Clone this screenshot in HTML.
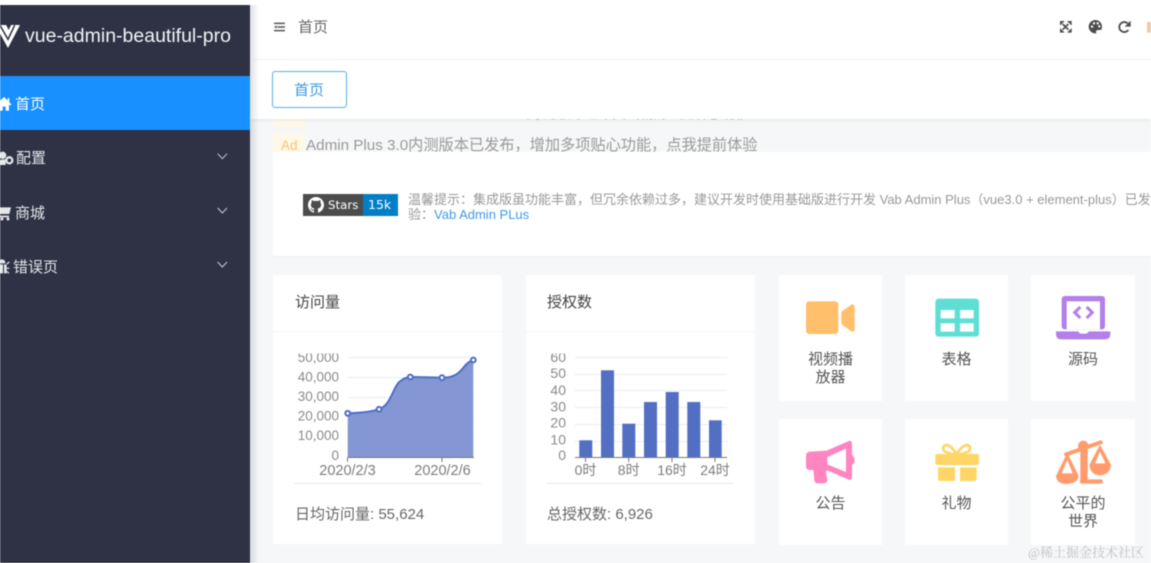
<!DOCTYPE html>
<html lang="zh">
<head>
<meta charset="utf-8">
<title>vue-admin-beautiful-pro</title>
<style>
html,body{margin:0;padding:0;width:1151px;height:563px;overflow:hidden;background:#fff}
body{font-family:"Liberation Sans","Noto Sans CJK SC",sans-serif;position:relative;color:#555}
#w{position:absolute;left:0;top:0;width:1151px;height:563px;overflow:hidden;filter:blur(.4px)}
.a{position:absolute;white-space:nowrap}
.card{position:absolute;background:#fff}
.t{position:absolute;font-size:15px;line-height:18px;text-align:center;color:#555}
svg{position:absolute;overflow:visible}
svg text{font-family:"Liberation Sans","Noto Sans CJK SC",sans-serif}
</style>
</head>
<body>
<div id="w">
  <!-- content background -->
  <div class="a" style="left:250px;top:119px;width:901px;height:444px;background:#f5f7f8"></div>

  <!-- ad rows -->
  <div class="a" style="left:273px;top:119px;width:32px;height:8px;background:#fff8e9"></div>
  <div class="a" style="left:273px;top:133px;width:32px;height:20px;background:#fff8e9"></div>
  <div class="a" style="left:281px;top:138px;font-size:13.5px;line-height:15px;color:#f8c46a">Ad</div>
  <div class="a" style="left:306px;top:137px;font-size:15.2px;line-height:18px;color:#999">Admin Plus 3.0内测版本已发布，增加多项贴心功能，点我提前体验</div>
  <div class="a" style="left:417px;top:119px;width:325px;height:2px;overflow:hidden"><div style="margin-top:-14px;font-size:15px;line-height:18px;color:#999">Vab Admin Plus 内测版本已发布增加多项贴心功能点我提前体验内测版本</div></div>

  <!-- notice card -->
  <div class="card" style="left:273px;top:152px;width:878px;height:104px;border-bottom:1px solid #eef0f2"></div>
  <div class="a" style="left:303px;top:194px;width:60px;height:22px;background:#4c4c4c"></div>
  <div class="a" style="left:363px;top:194px;width:35px;height:22px;background:#007ec6"></div>
  <svg style="left:308px;top:197px" width="16" height="16" viewBox="0 0 16 16"><path fill="#fff" d="M8 0C3.58 0 0 3.58 0 8c0 3.54 2.29 6.53 5.47 7.59.4.07.55-.17.55-.38 0-.19-.01-.82-.01-1.49-2.01.37-2.53-.49-2.69-.94-.09-.23-.48-.94-.82-1.13-.28-.15-.68-.52-.01-.53.63-.01 1.08.58 1.23.82.72 1.21 1.87.87 2.33.66.07-.52.28-.87.51-1.07-1.78-.2-3.64-.89-3.64-3.95 0-.87.31-1.59.82-2.15-.08-.2-.36-1.02.08-2.12 0 0 .67-.21 2.2.82.64-.18 1.32-.27 2-.27s1.36.09 2 .27c1.53-1.04 2.2-.82 2.2-.82.44 1.1.16 1.92.08 2.12.51.56.82 1.27.82 2.15 0 3.07-1.87 3.75-3.65 3.95.29.25.54.73.54 1.48 0 1.07-.01 1.93-.01 2.2 0 .21.15.46.55.38A8.01 8.01 0 0 0 16 8c0-4.42-3.58-8-8-8z"/></svg>
  <div class="a" style="left:328px;top:198px;font:11.8px/14px 'DejaVu Sans',sans-serif;color:#fff">Stars</div>
  <div class="a" style="left:368px;top:198px;font:12.5px/14px 'DejaVu Sans',sans-serif;color:#fff">15k</div>
  <div class="a" style="left:408px;top:192px;font-size:13px;line-height:15px;color:#999">温馨提示：集成版虽功能丰富，但冗余依赖过多，建议开发时使用基础版进行开发 Vab Admin Plus（vue3.0 + element-plus）已发布，欢迎体<br>验：<span style="color:#3f9ae8">Vab Admin PLus</span></div>

  <!-- stat cards -->
  <div class="card" style="left:273px;top:275px;width:229px;height:269px"></div>
  <div class="a" style="left:273px;top:331px;width:229px;height:1px;background:#f4f6f8"></div>
  <div class="a" style="left:295px;top:294px;font-size:15px;line-height:18px;color:#444">访问量</div>
  <div class="card" style="left:526px;top:275px;width:229px;height:269px"></div>
  <div class="a" style="left:526px;top:331px;width:229px;height:1px;background:#f4f6f8"></div>
  <div class="a" style="left:547px;top:294px;font-size:15px;line-height:18px;color:#444">授权数</div>

  <svg style="left:0;top:0" width="1151" height="563" viewBox="0 0 1151 563">
    <defs><clipPath id="c1"><rect x="260" y="353.5" width="500" height="130"/></clipPath></defs>
    <g stroke="#e9ecf2" stroke-width="1">
      <path d="M348 357.5H474M348 377.5H474M348 397.5H474M348 417.5H474M348 437.5H474"/>
      <path d="M575 357.5H727M575 374.5H727M575 390.5H727M575 407.5H727M575 424.5H727M575 441.5H727"/>
    </g>
    <path fill="#8497d4" d="M347.7 413.3C360 413 370 412 379 409.3C392 405 393 384 402 380C405 378 408 377 410.3 377C420 377 432 377.5 442 377.7C455 378 460 372 464 367C467 363 470 361 473.3 360V457H347.7Z"/>
    <path fill="none" stroke="#4f6ec5" stroke-width="2" d="M347.7 413.3C360 413 370 412 379 409.3C392 405 393 384 402 380C405 378 408 377 410.3 377C420 377 432 377.5 442 377.7C455 378 460 372 464 367C467 363 470 361 473.3 360"/>
    <g fill="#fff" stroke="#4f6ec5" stroke-width="2">
      <circle cx="347.7" cy="413.3" r="2.4"/><circle cx="379" cy="409.3" r="2.4"/><circle cx="410.3" cy="377" r="2.4"/><circle cx="442" cy="377.7" r="2.4"/><circle cx="473.3" cy="360" r="2.4"/>
    </g>
    <g stroke="#777" stroke-width="1" fill="none"><path d="M347.5 457.5H474M347.5 457.5V462M442 457.5V462"/></g>
    <g clip-path="url(#c1)" font-size="13.5" fill="#8a8a8a" text-anchor="end">
      <text x="339" y="362">50,000</text><text x="339" y="381.7">40,000</text><text x="339" y="401">30,000</text><text x="339" y="420.5">20,000</text><text x="339" y="440">10,000</text><text x="339" y="460">0</text>
    </g>
    <g font-size="14.5" fill="#7d7d7d" text-anchor="middle">
      <text x="347.5" y="475">2020/2/3</text><text x="442.500" y="475">2020/2/6</text>
    </g>
    <!-- chart 2 -->
    <g fill="#536fc4">
      <rect x="579.3" y="440.3" width="13" height="16.7"/><rect x="601" y="370.3" width="13" height="86.7"/><rect x="622.3" y="423.7" width="13" height="33.3"/><rect x="644" y="402" width="13" height="55"/><rect x="665.7" y="392" width="13" height="65"/><rect x="687.3" y="402" width="13" height="55"/><rect x="709" y="420.3" width="12.7" height="36.7"/>
    </g>
    <g stroke="#777" stroke-width="1" fill="none"><path d="M575 457.5H727M585.5 457.5V462M628.7 457.5V462M672 457.5V462M715 457.5V462"/></g>
    <g clip-path="url(#c1)" font-size="14" fill="#8a8a8a" text-anchor="end">
      <text x="566" y="362">60</text><text x="566" y="378">50</text><text x="566" y="395">40</text><text x="566" y="411.7">30</text><text x="566" y="427.7">20</text><text x="566" y="444.3">10</text><text x="566" y="460">0</text>
    </g>
    <g font-size="14" fill="#7d7d7d" text-anchor="middle">
      <text x="585.5" y="475">0时</text><text x="628.7" y="475">8时</text><text x="672" y="475">16时</text><text x="715" y="475">24时</text>
    </g>
  </svg>
  <div class="a" style="left:294px;top:483px;width:187px;height:1px;background:#e3e6ea"></div>
  <div class="a" style="left:295px;top:506px;font-size:15px;line-height:18px;color:#666">日均访问量: 55,624</div>
  <div class="a" style="left:547px;top:483px;width:186px;height:1px;background:#e3e6ea"></div>
  <div class="a" style="left:547px;top:506px;font-size:15px;line-height:18px;color:#666">总授权数: 6,926</div>

  <!-- icon cards -->
  <div class="card" style="left:779px;top:275px;width:103px;height:126px"></div>
  <div class="card" style="left:905px;top:275px;width:103px;height:126px"></div>
  <div class="card" style="left:1031px;top:275px;width:104px;height:126px"></div>
  <div class="card" style="left:779px;top:419px;width:103px;height:126px"></div>
  <div class="card" style="left:905px;top:419px;width:103px;height:126px"></div>
  <div class="card" style="left:1031px;top:419px;width:104px;height:126px"></div>

  <svg style="left:770px;top:270px" width="381" height="145" viewBox="0 0 1143 435">
    <rect x="108" y="94" width="97" height="98" rx="10" fill="#ffbf6b"/>
    <path fill="#ffbf6b" d="M214 130Q214 125 219 122L244 104Q254 100 254 112V176Q254 188 244 184L219 166Q214 162 214 158Z"/>
    <rect x="496" y="86" width="131" height="114" rx="10" fill="#5fdfd4"/>
    <g fill="#fff"><rect x="512" y="120" width="42" height="25"/><rect x="570" y="120" width="41" height="25"/><rect x="512" y="160" width="42" height="25"/><rect x="570" y="160" width="41" height="25"/></g>
    <rect x="875" y="78" width="130" height="100" rx="9" fill="#b37feb"/>
    <rect x="890" y="94" width="100" height="84" fill="#fff"/>
    <path fill="#b37feb" d="M858 184H925Q928 191 935 191H946Q953 191 956 184H1021V192Q1021 208 1005 208H874Q858 208 858 192Z"/>
    <path fill="none" stroke="#b37feb" stroke-width="9" d="M931 111L914 127.500L931 144M950 111L967 127.500L950 144"/>
  </svg>
  <svg style="left:770px;top:410px" width="381" height="153" viewBox="0 0 1143 459">
    <path fill="#ff85c0" fill-rule="evenodd" d="M108 138Q108 125 122 125L170 122L234 94Q246 88 246 102V135Q254 142 254 150Q254 160 246 165V200Q246 214 234 208L174 182Q168 180 168 188L172 210Q172 220 160 220H142Q134 220 133 210L130 180H120Q108 180 108 168ZM172 141V163L228 186V116Z"/>
    <path fill="none" stroke="#ffd666" stroke-width="8" d="M560 134C545 105 525 98 520 112C516 124 535 132 560 134C585 132 604 124 600 112C595 98 575 105 560 134"/>
    <rect x="496" y="132" width="131" height="33" rx="6" fill="#ffd666"/>
    <path fill="#ffd666" d="M504 172H555V213H512Q504 213 504 205ZM570 172H620V205Q620 213 612 213H570Z"/>
    <g fill="#ff9c6e">
      <path d="M888 133L992 97" stroke="#ff9c6e" stroke-width="12" stroke-linecap="round"/>
      <circle cx="940" cy="108" r="16"/>
      <rect x="931" y="108" width="22" height="110"/>
      <rect x="930" y="208" width="68" height="13" rx="5"/>
      <path fill-rule="evenodd" d="M892 128L858 198Q860 222 890 222Q924 220 926 198ZM892 150L875 190H908ZM990 104L958 165Q962 196 990 196Q1020 194 1023 165ZM990 125L975 160H1006Z"/>
    </g>
  </svg>

  <div class="t" style="left:779px;top:351px;width:103px">视频播<br>放器</div>
  <div class="t" style="left:905px;top:351px;width:103px">表格</div>
  <div class="t" style="left:1031px;top:351px;width:104px">源码</div>
  <div class="t" style="left:779px;top:495px;width:103px">公告</div>
  <div class="t" style="left:905px;top:495px;width:103px">礼物</div>
  <div class="t" style="left:1031px;top:495px;width:104px">公平的<br>世界</div>

  <div class="a" style="left:1028px;top:545px;font-size:13px;line-height:16px;color:#c0c2c6;font-family:'Liberation Serif','Noto Serif CJK SC',serif">@稀土掘金技术社区</div>

  <!-- header + tabs -->
  <div class="a" style="left:250px;top:5px;width:901px;height:114px;background:#fff;box-shadow:0 1px 4px rgba(0,0,0,.08)"></div>
  <div class="a" style="left:253px;top:59px;width:898px;height:1px;background:#f0f1f3"></div>
  <svg style="left:260px;top:0" width="30" height="40" viewBox="0 0 90 120">
    <path stroke="#555" stroke-width="4.500" fill="none" d="M42 70H75M52 81H75M42 92H75"/>
    <path fill="#555" d="M42 81L50 76V86Z"/>
  </svg>
  <div class="a" style="left:298px;top:19px;font-size:15px;line-height:18px;color:#666">首页</div>
  <div class="a" style="left:272px;top:71px;width:73px;height:35px;border:1px solid #56afe0;border-radius:3px;text-align:center;font-size:15px;line-height:37px;color:#3c9ae0;background:#fff;text-indent:-1px">首页</div>

  <svg style="left:770px;top:0" width="381" height="120" viewBox="0 0 1143 360">
    <g fill="none" stroke="#4d4d4d" stroke-width="5">
      <path d="M878 72L895 89M895 72L878 89"/>
    </g>
    <path fill="#4d4d4d" d="M870 63H884L870 77ZM905 63V77L891 63ZM870 98V84L884 98ZM905 98H891L905 84Z"/>
    <circle cx="976" cy="80" r="20" fill="#4d4d4d"/>
    <g fill="#fff"><circle cx="966" cy="80" r="3.500"/><circle cx="972" cy="70" r="3.500"/><circle cx="983" cy="70" r="3.500"/><circle cx="988" cy="79" r="3.500"/></g>
    <path fill="#fff" d="M980 101Q975 92 983 90H998V101Z"/>
    <path fill="none" stroke="#4d4d4d" stroke-width="5.500" d="M1075 90A15 15 0 1 1 1073 70"/>
    <path fill="#4d4d4d" d="M1082 62V80H1064Z"/>
    <rect x="1131" y="66" width="12" height="32" fill="#efc9a8"/>
  </svg>

  <!-- sidebar -->
  <div class="a" style="left:250px;top:5px;width:9px;height:558px;background:linear-gradient(90deg,rgba(40,50,70,.14),rgba(40,50,70,0))"></div>
  <div class="a" style="left:0;top:5px;width:250px;height:558px;background:#2f3145"></div>
  <div class="a" style="left:0;top:76px;width:250px;height:54px;background:#1890ff"></div>
  <div class="a" style="left:25px;top:24px;font-size:19.5px;line-height:24px;color:#f2f4f7">vue-admin-beautiful-pro</div>
  <div class="a" style="left:15px;top:96px;font-size:15px;line-height:18px;color:#fff">首页</div>
  <div class="a" style="left:16px;top:150px;font-size:15px;line-height:18px;color:#e4e6ea">配置</div>
  <div class="a" style="left:15px;top:205px;font-size:15px;line-height:18px;color:#e4e6ea">商城</div>
  <div class="a" style="left:13px;top:259px;font-size:15px;line-height:18px;color:#e4e6ea">错误页</div>
  <svg style="left:0;top:0" width="280" height="290" viewBox="0 0 840 870">
    <path fill="#fff" d="M-14 75H60L24 144Z"/>
    <path fill="none" stroke="#2f3145" stroke-width="4.500" d="M0 76L24 118L44 76"/>
    <path fill="#2f3145" d="M18 74H34L26 90Z"/>
    <path fill="#fff" d="M12 291L23 302V294H28V307L34 313L31 317L27 314V332H17V320H8V332H-2V304Z"/>
    <g fill="#e4e6ea">
      <circle cx="8" cy="466" r="11"/>
      <path d="M-4 495V488Q-2 478 10 478H17V495Z"/>
      <circle cx="28" cy="481" r="9" fill="none" stroke="#e4e6ea" stroke-width="7"/>
      <path d="M0 622H33L28 642H0ZM0 647H27V652H0Z"/>
      <circle cx="6" cy="657" r="4.500"/><circle cx="24" cy="657" r="4.500"/>
      <path d="M6 778Q16 778 16 790H-4Q-4 778 6 778ZM0 793H9V820H0ZM12 793H20V820H12Z"/>
      <path d="M20 792L28 786M20 805H28M20 814L27 820" stroke="#e4e6ea" stroke-width="3.500"/>
    </g>
    <g fill="none" stroke="#c9ccd4" stroke-width="3">
      <path d="M653 461L667 476L681 461M653 624L667 639L681 624M653 786L667 801L681 786"/>
    </g>
  </svg>
  <!-- top white strip -->
  <div class="a" style="left:0;top:0;width:1151px;height:5px;background:#fff"></div>
</div>
</body>
</html>
